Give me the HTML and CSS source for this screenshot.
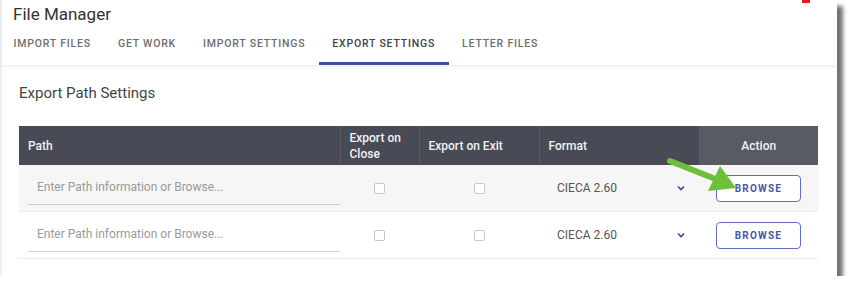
FILE: index.html
```html
<!DOCTYPE html>
<html lang="en">
<head>
  <meta charset="UTF-8" />
  <title>File Manager</title>
  <link rel="stylesheet" href="styles.css">
</head>
<body>
  <div class="window">
    <span class="corner-mark"></span>
    <header class="appbar">
      <h1>File Manager</h1>
      <nav class="tabs">
        <span class="tab">Import Files</span>
        <span class="tab">Get Work</span>
        <span class="tab">Import Settings</span>
        <span class="tab active">Export Settings</span>
        <span class="tab">Letter Files</span>
      </nav>
    </header>

    <section class="content">
      <h2>Export Path Settings</h2>
      <table class="paths">
        <thead>
          <tr>
            <th class="col-path">Path</th>
            <th class="col-close">Export on<br>Close</th>
            <th class="col-exit">Export on Exit</th>
            <th class="col-format">Format</th>
            <th class="col-action">Action</th>
          </tr>
        </thead>
        <tbody>
          <tr class="shaded">
            <td class="cell-path"><input type="text" placeholder="Enter Path information or Browse..." /></td>
            <td class="cell-check"><span class="box"></span></td>
            <td class="cell-check"><span class="box"></span></td>
            <td class="cell-format">
              <div class="select">
                <span>CIECA 2.60</span>
                <svg width="8" height="6" viewBox="0 0 8 6"><path d="M1 1.5 L4 4.5 L7 1.5" fill="none" stroke="#3a4a9c" stroke-width="1.6"/></svg>
              </div>
            </td>
            <td class="cell-action"><button>Browse</button></td>
          </tr>
          <tr>
            <td class="cell-path"><input type="text" placeholder="Enter Path information or Browse..." /></td>
            <td class="cell-check"><span class="box"></span></td>
            <td class="cell-check"><span class="box"></span></td>
            <td class="cell-format">
              <div class="select">
                <span>CIECA 2.60</span>
                <svg width="8" height="6" viewBox="0 0 8 6"><path d="M1 1.5 L4 4.5 L7 1.5" fill="none" stroke="#3a4a9c" stroke-width="1.6"/></svg>
              </div>
            </td>
            <td class="cell-action"><button>Browse</button></td>
          </tr>
        </tbody>
      </table>
    </section>

    <!-- callout arrow pointing at the first Browse button -->
    <svg class="callout" width="80" height="40" viewBox="0 0 80 40">
      <line x1="4" y1="3" x2="52" y2="22" stroke="#6cc03a" stroke-width="6" stroke-linecap="round"/>
      <polygon points="70,30 42,33 54,8" fill="#6cc03a"/>
    </svg>
  </div>
</body>
</html>
```

FILE: styles.css
```css
body {
  margin: 0;
  padding: 0;
  background: #fff;
  font-family: Roboto, 'Liberation Sans', sans-serif;
  color: #333;
}

.window {
  position: relative;
  width: 835px;
  height: 276px;
  background: #fff;
  border-left: 2px solid #eceff5;
  box-shadow: 6px 6px 4px rgba(0, 0, 0, 0.55);
}

.corner-mark {
  position: absolute;
  top: 0;
  left: 800px;
  width: 8px;
  height: 3px;
  background: #d62020;
}

.appbar {
  padding: 4px 0 0;
  box-shadow: 0 2px 3px rgba(0, 0, 0, 0.07);
}

h1 {
  margin: 0 0 0 11px;
  font-size: 17px;
  line-height: 20px;
  font-weight: 400;
  color: #333;
}

.tabs {
  display: flex;
  margin-left: -2px;
}

.tab {
  padding: 13px 13.5px 11px;
  border-bottom: 3px solid transparent;
  font-size: 10.5px;
  line-height: 14px;
  font-weight: 500;
  letter-spacing: 0.8px;
  text-transform: uppercase;
  color: #6e6e6e;
}

.tab.active {
  color: #444;
  border-bottom-color: #3f4fa8;
}

.content {
  padding: 0 17px 0 17px;
}

h2 {
  margin: 18px 0 23px;
  font-size: 15px;
  line-height: 20px;
  font-weight: 400;
  color: #444;
}

.paths {
  width: 799px;
  border-collapse: collapse;
  font-size: 12px;
}

.paths th {
  height: 39px;
  padding: 0 9px;
  background: #484b55;
  color: #f2f2f2;
  font-weight: 500;
  text-align: left;
  line-height: 16px;
  border-left: 1px solid #575a63;
}

.paths th:first-child {
  border-left: none;
}

.col-path { width: 302px; }
.col-close { width: 60px; }
.col-exit { width: 101px; }
.col-format { width: 141px; }

.paths th.col-action {
  background: #585b64;
  text-align: center;
}

.paths td {
  padding: 0;
  border-bottom: 1px solid #ececec;
}

.paths tr.shaded td {
  background: #f6f6f6;
}

.cell-path {
  padding: 10px 0 6px 9px !important;
}

.cell-path input {
  box-sizing: border-box;
  width: 312px;
  height: 30px;
  padding: 4px 9px 10px;
  border: none;
  border-bottom: 1px solid #cfcfcf;
  background: transparent;
  font-family: Roboto, 'Liberation Sans', sans-serif;
  font-size: 12px;
  line-height: 16px;
  outline: none;
}

.cell-path input::placeholder {
  color: #9a9a9a;
}

.cell-check {
  text-align: center;
}

.box {
  display: inline-block;
  width: 9px;
  height: 9px;
  border: 1px solid #c8c8c8;
  border-radius: 2px;
  background: #fff;
  vertical-align: middle;
}

.select {
  display: flex;
  align-items: center;
  justify-content: space-between;
  padding: 0 14px 0 18px;
  color: #555;
  font-size: 12px;
}

.cell-action {
  text-align: center;
}

button {
  width: 85px;
  height: 27px;
  border: 1px solid #6270bb;
  border-radius: 4px;
  background: #fff;
  color: #4a57a6;
  font-family: Roboto, 'Liberation Sans', sans-serif;
  font-size: 10px;
  font-weight: 700;
  letter-spacing: 1.2px;
  text-transform: uppercase;
  cursor: pointer;
}

.callout {
  position: absolute;
  left: 664px;
  top: 158px;
}
```
